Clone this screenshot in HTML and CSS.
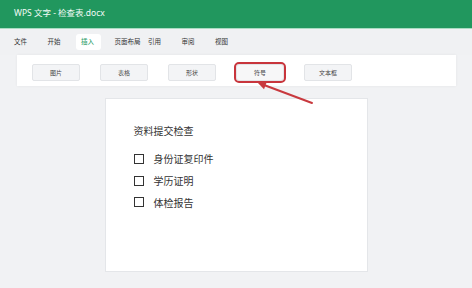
FILE: index.html
```html
<!DOCTYPE html>
<html lang="zh-CN">
<head>
    <meta charset="UTF-8">
    <meta name="viewport" content="width=device-width, initial-scale=1.0">
    <title>WPS 文字 - 检查表.docx</title>
    <link rel="stylesheet" href="styles.css">
</head>
<body>
    <div class="app">
        <!-- Title bar -->
        <div class="titlebar">WPS 文字 - 检查表.docx</div>

        <!-- Menu tabs -->
        <div class="menubar">
            <div class="tab">文件</div>
            <div class="tab">开始</div>
            <div class="tab active">插入</div>
            <div class="tab">页面布局</div>
            <div class="tab">引用</div>
            <div class="tab">审阅</div>
            <div class="tab">视图</div>
        </div>

        <!-- Ribbon -->
        <div class="ribbon">
            <button class="tool">图片</button>
            <button class="tool">表格</button>
            <button class="tool">形状</button>
            <button class="tool marked">符号</button>
            <button class="tool">文本框</button>
        </div>

        <!-- Document page -->
        <div class="page">
            <h2 class="doc-title">资料提交检查</h2>
            <ul class="checklist">
                <li><span class="box"></span>身份证复印件</li>
                <li><span class="box"></span>学历证明</li>
                <li><span class="box"></span>体检报告</li>
            </ul>
        </div>

        <!-- Callout arrow -->
        <svg class="arrow" width="472" height="288" viewBox="0 0 472 288">
            <line x1="312" y1="103" x2="264" y2="85" stroke="#c8393e" stroke-width="2" stroke-linecap="round"/>
            <polygon points="257,82 267,81.2 264,89.2" fill="#c8393e"/>
        </svg>
    </div>
</body>
</html>
```

FILE: styles.css
```css
body {
    margin: 0;
    padding: 0;
    background-color: #f1f2f4;
    font-family: "Noto Sans", "Noto Sans CJK SC", sans-serif;
}
.app {
    position: relative;
    width: 472px;
    height: 288px;
    overflow: hidden;
}
.titlebar {
    height: 28px;
    line-height: 26px;
    padding-left: 14px;
    background-color: #21975e;
    border-bottom: 1px solid #a9dcc2;
    color: #f4fbf7;
    font-size: 8.5px;
}
.menubar {
    display: flex;
    align-items: center;
    height: 26px;
    padding-left: 9px;
    background-color: #f0f1f3;
}
.tab {
    box-sizing: border-box;
    width: 33.5px;
    padding: 0 5px;
    white-space: nowrap;
    font-size: 6.5px;
    line-height: 16px;
    color: #333;
}
.tab.active {
    width: 25px;
    margin-right: 8.5px;
    background-color: #fff;
    border-radius: 3px;
    color: #21975e;
}
.ribbon {
    display: flex;
    align-items: flex-start;
    gap: 20px;
    height: 31px;
    box-sizing: border-box;
    margin: 0 16px 0 17px;
    padding: 9px 15px 0;
    background: white;
    box-shadow: 0 0 3px rgba(0, 0, 0, 0.06);
}
.tool {
    width: 48px;
    height: 17px;
    padding: 0;
    background-color: #f3f4f6;
    border: 1px solid #e2e4e7;
    border-radius: 2px;
    font-family: "Noto Sans CJK SC", sans-serif;
    font-size: 6px;
    color: #444;
}
.tool.marked {
    outline: 2px solid #c8353c;
    border-radius: 3px;
    background-color: #f7f7f8;
}
.page {
    width: 263px;
    height: 174px;
    box-sizing: border-box;
    margin: 12px auto 0;
    padding: 25px 28px 0;
    background: white;
    border: 1px solid #e4e6e9;
}
.doc-title {
    margin: 0 0 10px;
    font-size: 10px;
    font-weight: normal;
    line-height: 14px;
    color: #333;
}
.checklist {
    list-style: none;
    margin: 0;
    padding: 0;
}
.checklist li {
    display: flex;
    align-items: center;
    height: 21.7px;
    font-size: 10px;
    color: #333;
}
.box {
    width: 8px;
    height: 8px;
    margin-right: 10px;
    border: 1.3px solid #333;
}
.arrow {
    position: absolute;
    left: 0;
    top: 0;
    pointer-events: none;
}
```
